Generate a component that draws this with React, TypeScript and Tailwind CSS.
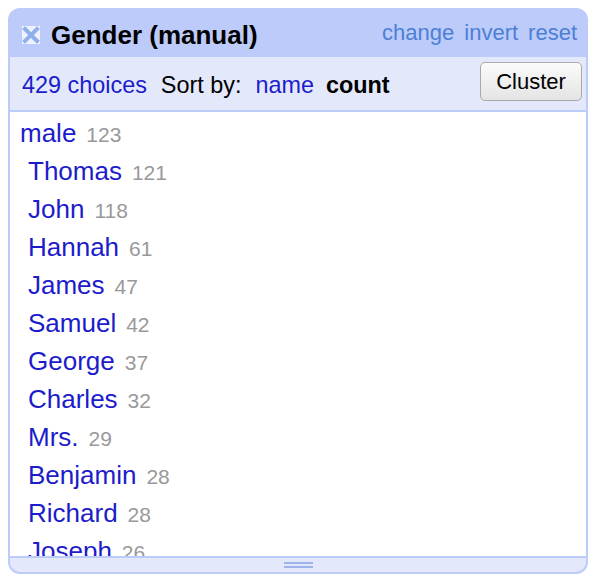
import React from 'react';

const choices: [string, number][] = [
  ['Thomas', 121],
  ['John', 118],
  ['Hannah', 61],
  ['James', 47],
  ['Samuel', 42],
  ['George', 37],
  ['Charles', 32],
  ['Mrs.', 29],
  ['Benjamin', 28],
  ['Richard', 28],
  ['Joseph', 26],
  ['William', 25],
];

function CloseIcon() {
  return (
    <svg width="18" height="18" viewBox="0 0 18 18" className="shrink-0">
      <rect x="0" y="0" width="18" height="18" fill="#eef2fd" />
      <path d="M3 3 L15 15 M15 3 L3 15" stroke="#8fb0ec" strokeWidth="4" strokeLinecap="square" />
    </svg>
  );
}

export default function App() {
  return (
    <div className="w-[596px] h-[584px] bg-white p-2" style={{ fontFamily: '"Liberation Sans", Arial, sans-serif' }}>
      <div className="w-[580px] h-[566px] flex flex-col rounded-[12px] overflow-hidden bg-[#bccbf9]">
        {/* header */}
        <div className="h-[49px] flex items-center pl-[14px] pr-[11px] pt-[4px] shrink-0">
          <CloseIcon />
          <span className="ml-[11px] text-[26px] leading-none font-bold text-black">Gender (manual)</span>
          <div className="ml-auto flex gap-[10px] text-[22px] leading-none text-[#4c7fd6] -mt-[4px]">
            <span>change</span>
            <span>invert</span>
            <span>reset</span>
          </div>
        </div>

        {/* controls */}
        <div className="mx-[2px] h-[55px] shrink-0 bg-[#e3e9fb] flex items-center pl-[12px] pr-[4px] border-b-2 border-[#bccbf9]">
          <span className="text-[23.4px] leading-none text-[#1c1ccb] mt-[4px]">429 choices</span>
          <span className="ml-[14px] text-[23.4px] leading-none text-black mt-[4px]">Sort by:</span>
          <span className="ml-[14px] text-[23.4px] leading-none text-[#1c1ccb] mt-[4px]">name</span>
          <span className="ml-[12px] text-[23.4px] leading-none font-bold text-black mt-[4px]">count</span>
          <button className="ml-auto mb-[4px] h-[39px] w-[102px] rounded-[5px] border border-[#a9a9a9] bg-gradient-to-b from-[#fbfbfb] to-[#e4e4e4] text-[22px] leading-none text-black">
            Cluster
          </button>
        </div>

        {/* list */}
        <div className="mx-[2px] flex-1 bg-white overflow-hidden pt-[2px]">
          <div className="h-[38px] flex items-baseline pl-[10px] whitespace-nowrap">
            <span className="text-[26px] leading-[38px] text-[#1c1ccb]">male</span>
            <span className="ml-[10px] text-[21px] leading-[38px] text-[#999999]">123</span>
          </div>
          {choices.map(([name, count]) => (
            <div key={name} className="h-[38px] flex items-baseline pl-[18px] whitespace-nowrap">
              <span className="text-[26px] leading-[38px] text-[#1c1ccb]">{name}</span>
              <span className="ml-[10px] text-[21px] leading-[38px] text-[#999999]">{count}</span>
            </div>
          ))}
        </div>

        {/* resize grip */}
        <div className="mx-[2px] mb-[2px] h-[16px] shrink-0 border-t-2 border-[#bccbf9] bg-[#e3e9fb] rounded-b-[10px] flex items-center justify-center">
          <div className="w-[29px] flex flex-col gap-[2px]">
            <div className="h-[2px] bg-[#9db3ea]" />
            <div className="h-[2px] bg-[#9db3ea]" />
          </div>
        </div>
      </div>
    </div>
  );
}
